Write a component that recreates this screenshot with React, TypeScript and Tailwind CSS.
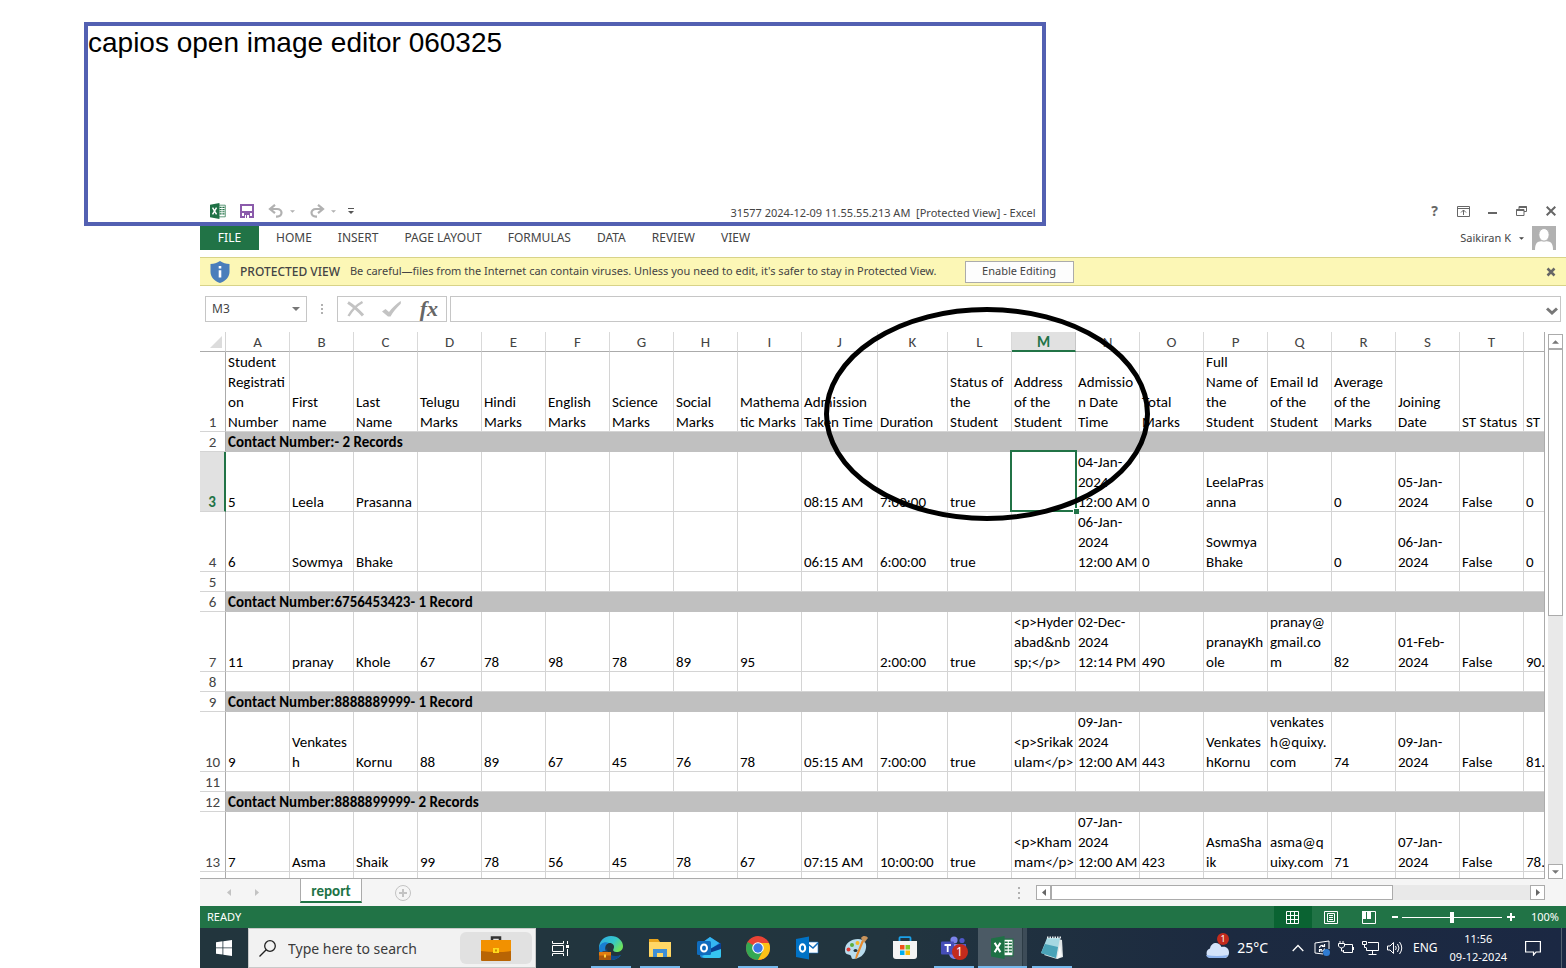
import React from "react";

type Row = {
  n: number;
  height: string;
  group?: string;
  cells?: string[];
};

const columns = "ABCDEFGHIJKLMNOPQRSTU".split("");

const rows: Row[] = [
  {
    n: 1,
    height: "h-20",
    cells: [
      "Student\nRegistrati\non\nNumber", "First\nname", "Last\nName", "Telugu\nMarks", "Hindi\nMarks",
      "English\nMarks", "Science\nMarks", "Social\nMarks", "Mathema\ntic Marks", "Admission\nTaken Time",
      "Duration", "Status of\nthe\nStudent", "Address\nof the\nStudent", "Admissio\nn Date\nTime",
      "Total\nMarks", "Full\nName of\nthe\nStudent", "Email Id\nof the\nStudent", "Average\nof the\nMarks",
      "Joining\nDate", "ST Status", "ST",
    ],
  },
  { n: 2, height: "h-5", group: "Contact Number:- 2 Records" },
  {
    n: 3,
    height: "h-15",
    cells: [
      "5", "Leela", "Prasanna", "", "", "", "", "", "", "08:15 AM", "7:00:00", "true", "",
      "04-Jan-\n2024\n12:00 AM", "0", "LeelaPras\nanna", "", "0", "05-Jan-\n2024", "False", "0",
    ],
  },
  {
    n: 4,
    height: "h-15",
    cells: [
      "6", "Sowmya", "Bhake", "", "", "", "", "", "", "06:15 AM", "6:00:00", "true", "",
      "06-Jan-\n2024\n12:00 AM", "0", "Sowmya\nBhake", "", "0", "06-Jan-\n2024", "False", "0",
    ],
  },
  { n: 5, height: "h-5", cells: [] },
  { n: 6, height: "h-5", group: "Contact Number:6756453423- 1 Record" },
  {
    n: 7,
    height: "h-15",
    cells: [
      "11", "pranay", "Khole", "67", "78", "98", "78", "89", "95", "", "2:00:00", "true",
      "<p>Hyder\nabad&nb\nsp;</p>", "02-Dec-\n2024\n12:14 PM", "490", "pranayKh\nole",
      "pranay@\ngmail.co\nm", "82", "01-Feb-\n2024", "False", "90.",
    ],
  },
  { n: 8, height: "h-5", cells: [] },
  { n: 9, height: "h-5", group: "Contact Number:8888889999- 1 Record" },
  {
    n: 10,
    height: "h-15",
    cells: [
      "9", "Venkates\nh", "Kornu", "88", "89", "67", "45", "76", "78", "05:15 AM", "7:00:00", "true",
      "<p>Srikak\nulam</p>", "09-Jan-\n2024\n12:00 AM", "443", "Venkates\nhKornu",
      "venkates\nh@quixy.\ncom", "74", "09-Jan-\n2024", "False", "81.",
    ],
  },
  { n: 11, height: "h-5", cells: [] },
  { n: 12, height: "h-5", group: "Contact Number:8888899999- 2 Records" },
  {
    n: 13,
    height: "h-15",
    cells: [
      "7", "Asma", "Shaik", "99", "78", "56", "45", "78", "67", "07:15 AM", "10:00:00", "true",
      "<p>Kham\nmam</p>", "07-Jan-\n2024\n12:00 AM", "423", "AsmaSha\nik", "asma@q\nuixy.com", "71",
      "07-Jan-\n2024", "False", "78.",
    ],
  },
];

function ExcelIcon({ className }: { className: string }) {
  return (
    <svg viewBox="0 0 22 22" className={className} aria-hidden="true">
      <path d="M11 3h10v16H11z" fill="#fff" stroke="#217346" strokeWidth="1" />
      <path d="M13 6h3M13 9h3M13 12h3M13 15h3M17 6h3M17 9h3M17 12h3M17 15h3" stroke="#217346" strokeWidth="1.6" />
      <path d="M0 2.5 13 0v22L0 19.5z" fill="#1e7145" />
      <path d="m3.5 6.5 5.5 9M9 6.5l-5.5 9" stroke="#fff" strokeWidth="2" />
    </svg>
  );
}

function Caret({ className }: { className: string }) {
  return (
    <svg viewBox="0 0 8 4" className={className} aria-hidden="true">
      <path d="M0 0h8L4 4z" fill="currentColor" />
    </svg>
  );
}

function TitleBar() {
  const control = "flex h-7 w-[29px] items-center justify-center text-[#666]";
  return (
    <header className="grid h-[30px] grid-cols-[1fr_auto_1fr] items-center">
      <div className="flex items-center pl-2.5 text-[#b1b1b1]">
        <ExcelIcon className="size-4" />
        <button aria-label="Save" className="ml-3.5">
          <svg viewBox="0 0 14 14" className="size-3.5">
            <path d="M1 1h12v12H1z" fill="#fff" stroke="#8b5bab" strokeWidth="2" />
            <path d="M1 8h12" stroke="#8b5bab" strokeWidth="2" />
            <path d="M4 9h6v5H4z" fill="#8b5bab" />
            <path d="M5 11h1v3H5zM7 11h2v3H7z" fill="#fff" />
          </svg>
        </button>
        <button aria-label="Undo" className="ml-3.5 flex items-center gap-1.5">
          <svg viewBox="0 0 16 14" className="h-3.5 w-4" fill="none" stroke="currentColor" strokeWidth="2.2">
            <path d="M7 0.8 2 5l5 4.2M2 5h7c6 0 6 7.6 0 7.6H8" />
          </svg>
          <Caret className="h-[3px] w-[5px]" />
        </button>
        <button aria-label="Redo" className="ml-3.5 flex items-center gap-1.5">
          <svg viewBox="0 0 16 14" className="h-3.5 w-4" fill="none" stroke="currentColor" strokeWidth="2.2">
            <path d="M9 0.8 14 5 9 9.2M14 5H7C1 5 1 12.6 7 12.6h1" />
          </svg>
          <Caret className="h-[3px] w-[5px]" />
        </button>
        <button aria-label="Customize toolbar" className="ml-3 flex flex-col items-center gap-0.5 text-[#555]">
          <span className="h-px w-1.5 bg-[#555]" />
          <Caret className="h-[3px] w-1.5" />
        </button>
      </div>
      <h1 className="pt-1 text-[11px] whitespace-pre text-[#444]">
        {"31577 2024-12-09 11.55.55.213 AM  [Protected View] - Excel"}
      </h1>
      <div className="flex justify-end pr-px">
        <button aria-label="Help" className={control}>
          <span className="text-sm font-bold">?</span>
        </button>
        <button aria-label="Ribbon display" className={control}>
          <svg viewBox="0 0 13 11" className="h-[11px] w-[13px]" fill="none" stroke="currentColor">
            <path d="M.5.5h12v10H.5zM.5 2.5h12M6.5 4v5M4 6.5 6.5 4 9 6.5" />
          </svg>
        </button>
        <button aria-label="Minimize" className={control}>
          <span className="mt-1 h-0.5 w-[9px] bg-[#666]" />
        </button>
        <button aria-label="Restore" className={control}>
          <svg viewBox="0 0 11 10" className="h-2.5 w-[11px]" fill="none" stroke="currentColor">
            <path d="M3 3V.5h7.5v5H8M.5 3.5h7.5v6H.5z" />
            <path d="M3 1h7.5M.5 4h7.5" strokeWidth="2" />
          </svg>
        </button>
        <button aria-label="Close" className={control}>
          <svg viewBox="0 0 10 10" className="size-2.5" stroke="currentColor" strokeWidth="2">
            <path d="m.7.7 8.6 8.6M9.3.7.7 9.3" />
          </svg>
        </button>
      </div>
    </header>
  );
}

function Ribbon() {
  return (
    <div className="flex h-6 items-center text-xs text-[#444]">
      <nav aria-label="Ribbon" className="flex items-center gap-[26px]">
        <button className="-mr-[9px] h-6 w-[59px] bg-[#217346] text-white">FILE</button>
        {["HOME", "INSERT", "PAGE LAYOUT", "FORMULAS", "DATA", "REVIEW", "VIEW"].map((t) => (
          <button key={t}>{t}</button>
        ))}
      </nav>
      <button className="mr-2.5 ml-auto flex items-center gap-2 text-[11px]">
        Saikiran K
        <Caret className="h-[3px] w-[5px]" />
        <svg viewBox="0 0 24 24" className="size-6" aria-hidden="true">
          <path d="M0 0h24v24H0z" fill="#b1b1b1" />
          <path d="M3 24c0-7 2.500-8.500 6-8.700h6c3.500.2 6 1.700 6 8.700z" fill="#fff" />
          <ellipse cx="12" cy="8.800" rx="5.200" ry="6.300" fill="#fff" stroke="#b1b1b1" />
        </svg>
      </button>
    </div>
  );
}

function ProtectedBanner() {
  return (
    <div className="mt-[7px] flex h-[29px] items-center border-y border-[#d8d388] bg-[#fcf7b6] text-[11px] whitespace-nowrap text-[#444]">
      <svg viewBox="0 0 20 22" className="mr-2.5 ml-2.5 h-[22px] w-5" aria-hidden="true">
        <path d="M10 0c3 2 6 2.800 9.500 3v8c0 5-4 9-9.500 11C4.500 20 .5 16 .5 11V3C4 2.800 7 2 10 0z" fill="#4a7ebb" />
        <path d="M10 5v2.500M10 9.200v7.300" stroke="#fff" strokeWidth="2.600" />
      </svg>
      <strong className="mr-2.5 text-xs font-medium">PROTECTED VIEW</strong>
      <p>
        Be careful—files from the Internet can contain viruses. Unless you need to edit, it&apos;s safer to stay in
        Protected View.
      </p>
      <button className="ml-7 h-[22px] w-[109px] border border-[#ababab] bg-[#fdfdfd]">Enable Editing</button>
      <button aria-label="Dismiss" className="mr-2.5 ml-auto text-[#666]">
        <svg viewBox="0 0 10 10" className="size-2.5" stroke="currentColor" strokeWidth="2.500">
          <path d="m1.500 1.500 7 7M8.500 1.500l-7 7" />
        </svg>
      </button>
    </div>
  );
}

function FormulaBar() {
  return (
    <div className="mt-2.5 mb-2.5 flex h-[26px] pr-[5px] pl-[5px]">
      <div className="flex w-[102px] items-center border border-[#c6c6c6] pr-1.5 pl-1.5 text-[#444]">
        <input aria-label="Name box" defaultValue="M3" className="w-0 flex-1 text-xs outline-none" />
        <Caret className="h-1 w-2 text-[#777]" />
      </div>
      <div className="flex w-[30px] flex-col items-center justify-center gap-0.5">
        <span className="size-0.5 bg-[#b1b1b1]" />
        <span className="size-0.5 bg-[#b1b1b1]" />
        <span className="size-0.5 bg-[#b1b1b1]" />
      </div>
      <div className="flex w-[110px] items-center justify-between border border-[#c6c6c6] pr-2 pl-[9px]">
        <button aria-label="Cancel">
          <svg viewBox="0 0 17 16" className="h-4 w-[17px]" fill="none" stroke="#c3c3c3">
            <path d="M1 1.500C5 4 11 9 16 14.500" strokeWidth="3" />
            <path d="M15.500 1C10 4 5 9 1.500 15" strokeWidth="2.400" />
          </svg>
        </button>
        <button aria-label="Enter">
          <svg viewBox="0 0 19 16" className="h-4 w-[19px]" fill="#c3c3c3">
            <path d="M0 10.500 3.500 8 7 11C10 7 14 3 18.500 0c.5.500.5 2.500 0 3C14 7.500 11 11 8.500 15.500H6z" />
          </svg>
        </button>
        <button aria-label="Insert function" className="font-['Liberation_Serif',serif] text-[22px] leading-6 font-bold text-[#666] italic">
          fx
        </button>
      </div>
      <div className="ml-[3px] flex flex-1 items-center border border-[#c6c6c6] pr-0.5">
        <input aria-label="Formula" className="w-0 flex-1 px-2 text-xs outline-none" />
        <button aria-label="Expand formula bar" className="pt-1">
          <svg viewBox="0 0 12 8" className="h-2 w-3" fill="none" stroke="#777" strokeWidth="3">
            <path d="m1 1.500 5 4.500 5-4.500" />
          </svg>
        </button>
      </div>
    </div>
  );
}

function Sheet() {
  return (
    <div className="min-w-0 flex-1 overflow-hidden border-r border-b border-[#ababab] font-['Carlito','Lato',sans-serif]">
      <table className="w-[1388px] table-fixed border-separate border-spacing-0 text-left text-[15px] leading-5 text-black">
        <colgroup>
          <col className="w-[26px]" />
          {columns.map((c) => (
            <col key={c} className={c === "J" ? "w-[76px]" : c === "K" ? "w-[70px]" : "w-16"} />
          ))}
        </colgroup>
        <thead>
          <tr className="h-5 text-center text-[#444]">
            <th aria-label="Select all" className="border-r border-b border-r-[#d4d4d4] border-b-[#ababab] p-0">
              <svg viewBox="0 0 12 12" className="ml-2.5 size-3" aria-hidden="true">
                <path d="M12 0v12H0z" fill="#dcdcdc" />
              </svg>
            </th>
            {columns.map((c) => (
              <th
                key={c}
                scope="col"
                className={
                  c === "M"
                    ? "border-r border-b-2 border-r-[#c6c6c6] border-b-[#217346] bg-[#e1e1e1] p-0 text-center align-top font-bold text-[#217346]"
                    : "border-r border-b border-r-[#d9d9d9] border-b-[#ababab] p-0 text-center align-top font-normal"
                }
              >
                <div className="h-[18px]">{c === "U" ? "" : c}</div>
              </th>
            ))}
          </tr>
        </thead>
        <tbody>
          {rows.map((r) => (
            <tr key={r.n} className={r.height}>
              <th
                scope="row"
                className={
                  r.n === 3
                    ? "border-r-2 border-b border-r-[#217346] border-b-[#d4d4d4] bg-[#e1e1e1] p-0 text-center align-bottom font-bold text-[#217346]"
                    : "border-r border-b border-r-[#ababab] border-b-[#d4d4d4] p-0 text-center align-bottom font-normal text-[#444]"
                }
              >
                <div className="h-[19px]">{r.n}</div>
              </th>
              {r.group ? (
                <td colSpan={21} className="bg-[#c0c0c0] p-0 pl-0.5 align-bottom font-bold">
                  {r.group}
                </td>
              ) : (
                columns.map((c, i) => (
                  <td
                    key={c}
                    className="relative border-r border-b border-[#d4d4d4] p-0 align-bottom"
                  >
                    {r.cells?.[i] ? (
                      <div className="-mb-px pl-0.5 whitespace-pre">{r.cells[i]}</div>
                    ) : null}
                    {r.n === 3 && c === "M" && (
                      <div className="absolute -inset-x-0.5 -top-0.5 -bottom-px z-10 border-2 border-[#217346]">
                        <span className="absolute -right-1 -bottom-1 size-[6px] border-t border-l border-white bg-[#217346]" />
                      </div>
                    )}
                  </td>
                ))
              )}
            </tr>
          ))}
          <tr className="h-1.5">
            <td className="border-r border-[#ababab] p-0" />
            {columns.map((c) => (
              <td key={c} className="border-r border-[#d4d4d4] p-0" />
            ))}
          </tr>
        </tbody>
      </table>
    </div>
  );
}

function VerticalScroll() {
  const arrow = "flex h-[15px] w-[15px] shrink-0 items-center justify-center border border-[#ababab] bg-white text-[#777]";
  return (
    <div className="mt-0.5 mr-[3px] ml-[3px] flex w-[15px] flex-col bg-[#f0f0f0]">
      <button aria-label="Scroll up" className={arrow}>
        <Caret className="h-1 w-[7px] rotate-180" />
      </button>
      <div className="flex flex-1 flex-col bg-[#e9e9e9]">
        <div className="h-[267px] border border-[#ababab] bg-white" />
      </div>
      <button aria-label="Scroll down" className={arrow}>
        <Caret className="h-1 w-[7px]" />
      </button>
    </div>
  );
}

function SheetTabs() {
  return (
    <div className="flex h-[27px] bg-[#f5f5f5] text-[#c3c3c3]">
      <div className="flex w-[100px] items-center gap-6 pl-[27px]">
        <button aria-label="Previous sheet">
          <svg viewBox="0 0 4 7" className="h-[7px] w-1" fill="currentColor"><path d="M4 0v7L0 3.500z" /></svg>
        </button>
        <button aria-label="Next sheet">
          <svg viewBox="0 0 4 7" className="h-[7px] w-1" fill="currentColor"><path d="M0 0v7l4-3.500z" /></svg>
        </button>
      </div>
      <button className="h-6 w-[62px] border-x border-b-2 border-x-[#ababab] border-b-[#217346] bg-white pt-0.5 font-['Carlito','Lato',sans-serif] text-[15px] leading-5 font-bold text-[#217346]">
        report
      </button>
      <button aria-label="New sheet" className="ml-[33px]">
        <svg viewBox="0 0 16 16" className="size-4" fill="none" stroke="currentColor">
          <circle cx="8" cy="8" r="7.500" />
          <path d="M8 4v8M4 8h8" strokeWidth="2" />
        </svg>
      </button>
      <div className="ml-auto flex w-[548px] items-center pr-[21px]">
        <div className="mr-4 flex flex-col gap-[3px]">
          <span className="size-0.5 bg-[#b1b1b1]" />
          <span className="size-0.5 bg-[#b1b1b1]" />
          <span className="size-0.5 bg-[#b1b1b1]" />
        </div>
        <button aria-label="Scroll left" className="flex h-[15px] w-[15px] items-center justify-center border border-[#ababab] bg-white text-[#666]">
          <svg viewBox="0 0 4 7" className="h-[7px] w-1" fill="currentColor"><path d="M4 0v7L0 3.500z" /></svg>
        </button>
        <div className="flex h-[15px] flex-1 bg-[#e9e9e9]">
          <div className="w-[342px] border border-[#ababab] bg-white" />
        </div>
        <button aria-label="Scroll right" className="flex h-[15px] w-[15px] items-center justify-center border border-[#ababab] bg-white text-[#666]">
          <svg viewBox="0 0 4 7" className="h-[7px] w-1" fill="currentColor"><path d="M0 0v7l4-3.500z" /></svg>
        </button>
      </div>
    </div>
  );
}

function StatusBar() {
  return (
    <footer className="flex h-[22px] items-center bg-[#217346] pr-[7px] pl-[7px] text-[11px] text-white">
      <span>READY</span>
      <button aria-label="Normal view" className="ml-auto flex h-[22px] w-[38px] items-center justify-center bg-[#0a6332]">
        <svg viewBox="0 0 13 13" className="size-[13px]" fill="none" stroke="#fff">
          <path d="M.5.500h12v12H.5zM4.500.500v12M8.500.500v12M.5 4.500h12M.5 8.500h12" />
        </svg>
      </button>
      <button aria-label="Page layout view" className="flex w-[38px] justify-center">
        <svg viewBox="0 0 14 13" className="h-[13px] w-3.5" fill="none" stroke="#fff">
          <path d="M.5.500h13v12H.5zM3.500 2.500h7v8h-7zM5 4.500h4M5 6.500h4M5 8.500h4" />
        </svg>
      </button>
      <button aria-label="Page break view" className="flex w-[38px] justify-center">
        <svg viewBox="0 0 14 13" className="h-[13px] w-3.5" fill="none" stroke="#fff">
          <path d="M.5.500h13v12H.5z" />
          <path d="M0 0h4v8H0zM5 0h4v8H5z" fill="#fff" stroke="none" />
        </svg>
      </button>
      <button aria-label="Zoom out" className="ml-px flex h-3 w-3 items-center justify-center">
        <span className="h-0.5 w-1.5 bg-white" />
      </button>
      <input
        type="range"
        aria-label="Zoom"
        defaultValue={50}
        className="mx-px h-3 w-[100px] appearance-none bg-transparent bg-[linear-gradient(#fff,#fff)] bg-[length:100%_1px] bg-center bg-no-repeat [&::-webkit-slider-thumb]:h-[11px] [&::-webkit-slider-thumb]:w-1 [&::-webkit-slider-thumb]:appearance-none [&::-webkit-slider-thumb]:bg-white"
      />
      <button aria-label="Zoom in" className="ml-0.5 flex h-3 w-3 items-center justify-center">
        <svg viewBox="0 0 8 8" className="size-2" stroke="#fff" strokeWidth="2"><path d="M4 0v8M0 4h8" /></svg>
      </button>
      <span className="ml-3.5">100%</span>
    </footer>
  );
}

const taskIcons: { name: string; state: string; icon: React.ReactNode }[] = [
  {
    name: "Edge",
    state: "open",
    icon: (
      <>
        <defs>
          <linearGradient id="edgeTop" x1="0" y1="0" x2="1" y2="0.600">
            <stop offset="0" stopColor="#2fa8e8" />
            <stop offset="0.600" stopColor="#35c8c9" />
            <stop offset="1" stopColor="#6ee35b" />
          </linearGradient>
        </defs>
        <path d="M0 12C0 5 5 0 12 0s12 5 12 10c0 4-3 6-6.500 6-3 0-4-1.500-3-3 2-4-2-7-6-5.500C4 8 1 11 0 14z" fill="url(#edgeTop)" />
        <path d="M0 12c1-5 6-7 10-5-4 1-5 6-2 10s9 5 14 2c-3 4-7 5-10 5C5 24 0 19 0 12z" fill="#1a7fd0" />
        <path d="M8.500 11c-2 6 4 11 13.500 8-3 4-7 5-10 5-5-3-6-9-3.500-13z" fill="#114a8b" />
        <path d="M0 16h12v8H0z" fill="#e07b10" />
        <path d="M0 19.500h12V24H0z" fill="#a9560c" />
        <path d="M3.500 15.500h5" stroke="#444" />
        <path d="M5 18.500h2v3H5z" fill="#ffd23c" />
      </>
    ),
  },
  {
    name: "File Explorer",
    state: "open",
    icon: (
      <>
        <path d="M1 3h9l2 3h11v4H1z" fill="#e8a41c" />
        <path d="M1 6h22v15H1z" fill="#ffd766" />
        <path d="M5 21v-8h14v8h-4v-4H9v4z" fill="#3f8fd6" />
        <path d="M1 20h4v1H1zM19 20h4v1h-4z" fill="#f5c343" />
      </>
    ),
  },
  {
    name: "Outlook",
    state: "",
    icon: (
      <>
        <path d="M3 8 13 1l11 7v12q0 2-2 2H6q-3 0-3-3z" fill="#1a86d9" />
        <path d="m5 7 8-6 9 6-8 6z" fill="#35b6f2" />
        <path d="M24 7v7l-9 5-2-6z" fill="#0a3f91" />
        <path d="M24 13v7q0 2-2 2H8q-2 0-3-2l10-4z" fill="#36c5f0" />
        <rect x="0" y="5" width="14" height="14" rx="1.500" fill="#0f6cbd" />
        <ellipse cx="7" cy="12" rx="3" ry="3.500" fill="none" stroke="#fff" strokeWidth="2" />
      </>
    ),
  },
  {
    name: "Chrome",
    state: "open",
    icon: (
      <>
        <circle cx="12" cy="12" r="12" fill="#ea4335" />
        <path d="m12 12 5 3-5 9C5 24 0 19 0 12c0-2 .6-4.500 1.700-6z" fill="#34a853" />
        <path d="M17 15 12 24c7 0 12-5 12-12 0-2-.5-3.500-1-5H12z" fill="#fbc116" />
        <circle cx="12" cy="12" r="5.800" fill="#fff" />
        <circle cx="12" cy="12" r="4.700" fill="#3b78e7" />
      </>
    ),
  },
  {
    name: "Outlook 2013",
    state: "",
    icon: (
      <>
        <path d="M12 6h11v11H12z" fill="#fff" stroke="#1b75c9" strokeWidth="0.600" />
        <path d="m13 8 5 4 5-5" fill="none" stroke="#0f6cbd" strokeWidth="1.500" />
        <path d="M1 3 14 .500v23L1 21z" fill="#0072c6" />
        <ellipse cx="7.500" cy="12" rx="2.700" ry="3.700" fill="none" stroke="#fff" strokeWidth="2" />
      </>
    ),
  },
  {
    name: "Paint",
    state: "",
    icon: (
      <>
        <path d="M1 14C1 7 7 3 14 3c6 0 9 4 8 9-1 7-7 11-13 11-2 0-1-3-3-4s-5 0-5-5z" fill="#b9dcee" />
        <ellipse cx="11.500" cy="14.500" rx="2" ry="1.600" fill="#22343c" />
        <circle cx="4.500" cy="13.500" r="2" fill="#e23b34" />
        <circle cx="8" cy="9" r="2" fill="#5dae3b" />
        <circle cx="13.500" cy="7" r="2" fill="#f4b92a" />
        <path d="M20 5 13 22l-2 1 1-4 6-15z" fill="#e88a2d" />
        <path d="M17 2c2-3 6-2 7 0l-4 5z" fill="#c9945c" />
      </>
    ),
  },
  {
    name: "Store",
    state: "",
    icon: (
      <>
        <path d="M6.500 6V2q0-.8.8-.8h9.400q.8 0 .8.800v4" fill="none" stroke="#1ba1e9" strokeWidth="1.800" />
        <path d="M0 5h24v15q0 3-3 3H3q-3 0-3-3z" fill="#f4f4f4" />
        <path d="M7 9h4.500v4.500H7z" fill="#f1511b" />
        <path d="M12.500 9H17v4.500h-4.500z" fill="#80cc28" />
        <path d="M7 14.500h4.500V19H7z" fill="#00adef" />
        <path d="M12.500 14.500H17V19h-4.500z" fill="#fbbc09" />
      </>
    ),
  },
  {
    name: "Teams",
    state: "open",
    icon: (
      <>
        <circle cx="12" cy="4" r="3.600" fill="#7b83eb" />
        <circle cx="20" cy="4.500" r="2.600" fill="#5059c9" />
        <path d="M15 8h9v6q0 4-4 4h-5z" fill="#5059c9" />
        <path d="M7 8h11v9q-1 6-6 6-5-1-5-6z" fill="#7b83eb" />
        <rect x="-1" y="5.500" width="13" height="13" rx="1" fill="#464eb8" />
        <path d="M2.500 9h6.500M5.700 9v7" stroke="#fff" strokeWidth="1.800" />
      </>
    ),
  },
  { name: "Excel", state: "active", icon: null },
  {
    name: "Notepad",
    state: "open",
    icon: (
      <>
        <path d="m19 3 3 1 1 17-6 2-13-4z" fill="#dfe5e6" />
        <path d="M7 2h13l-4 20L1 17z" fill="#a6d8e2" />
        <path d="m5 8 13 3-2 11L1 17z" fill="#4aa3b8" />
        <path d="M7 1.500h14" stroke="#e8eef0" strokeWidth="2" strokeDasharray="1.500 1" />
        <path d="m20 9 2 11-5 3z" fill="#f8fafa" />
      </>
    ),
  },
];

function Taskbar() {
  return (
    <div className="flex h-10 items-center bg-[linear-gradient(90deg,#22353d_0%,#22353f_50%,#1c2a40_75%,#1b2843_100%)] text-white">
      <button aria-label="Start" className="flex h-10 w-12 items-center justify-center">
        <svg viewBox="0 0 16 16" className="size-4" fill="#fff">
          <path d="M0 2.200 6.500 1.300v6.200H0zM7.300 1.200 16 0v7.500H7.300zM0 8.300h6.500v6.300L0 13.700zM7.300 8.300H16V16l-8.700-1.200z" />
        </svg>
      </button>
      <div className="flex h-10 w-72 items-center border border-[#c9c9c9] bg-[#f2f2f2] pr-[3px] pl-2.5">
        <svg viewBox="0 0 17 17" className="size-[17px]" fill="none" stroke="#222" strokeWidth="1.300">
          <circle cx="11" cy="6" r="5.300" />
          <path d="M7.200 9.800.500 16.500" />
        </svg>
        <input
          aria-label="Search"
          placeholder="Type here to search"
          className="ml-3 w-0 flex-1 text-[14px] outline-none placeholder:text-[#3b3b3b]"
        />
        <div className="flex h-8 w-[72px] items-center justify-center rounded-md bg-[#e1e1e1]">
          <svg viewBox="0 0 30 25" className="h-[25px] w-[30px]" aria-hidden="true">
            <path d="M11 4V1.500h8V4" fill="none" stroke="#333" strokeWidth="2.500" />
            <rect y="4" width="30" height="21" rx="1" fill="#b86404" />
            <path d="M0 5q0-1 1-1h28q1 0 1 1v10q-15 2-30 0z" fill="#f29100" />
            <path d="M12 12h6v5h-6z" fill="#ffd91c" />
            <path d="M14 13.500h2v2h-2z" fill="#c98a00" />
          </svg>
        </div>
      </div>
      <button aria-label="Task view" className="flex h-10 w-12 items-center justify-center">
        <svg viewBox="0 0 17 15" className="h-[15px] w-[17px]" fill="none" stroke="#fff">
          <path d="M.5 0v2.500h11V0M.5 15v-2.500h11V15M.5 4.500h11v6H.500zM15.500 0v3M15.500 8v7" />
          <path d="M14 4h3v3h-3z" fill="#fff" stroke="none" />
        </svg>
      </button>
      <div className="flex pl-0.5">
        {taskIcons.map((t) => (
          <button
            key={t.name}
            aria-label={t.name}
            className={
              t.state === "active"
                ? "flex h-10 w-[49px] flex-col items-center justify-between border-b-2 border-[#76b9ed] bg-[linear-gradient(90deg,#4b5a65_90%,#2c3b45_90%,#2c3b45_92%,#3d4c58_92%)]"
                : "flex h-10 w-[49px] flex-col items-center justify-between"
            }
          >
            <span className="relative mt-2 block size-6">
              {t.state === "active" ? (
                <ExcelIcon className="size-[23px]" />
              ) : (
                <svg viewBox="0 0 24 24" className="size-6 overflow-visible" aria-hidden="true">{t.icon}</svg>
              )}
              {t.name === "Teams" && (
                <span className="absolute top-2 left-2.5 flex size-4 items-center justify-center rounded-full bg-[#c42b1c] text-xs">
                  1
                </span>
              )}
            </span>
            {t.state === "open" && <span className="h-0.5 w-10 bg-[#76b9ed]" />}
          </button>
        ))}
      </div>
      <div className="ml-auto flex h-10 items-center">
        <button className="flex items-center gap-2 text-sm">
          <span className="relative block">
            <svg viewBox="0 0 24 22" className="h-[22px] w-6" aria-hidden="true">
              <path d="M5 21a5 5 0 0 1 0-9.500C6 5 14 4 16.500 10c5-1 7.500 2 7.500 5.500S22 21 19 21z" fill="#d4e3fa" />
              <path d="M1 18q11 2 22 0-1 3-4 3H5q-3 0-4-3z" fill="#8fb4ee" />
            </svg>
            <span className="absolute -top-1 left-3 flex size-3 items-center justify-center rounded-full bg-[#c42b1c] text-[9px]">
              1
            </span>
          </span>
          25°C
        </button>
        <button aria-label="Show hidden icons" className="ml-6">
          <svg viewBox="0 0 12 8" className="h-2 w-3" fill="none" stroke="#fff" strokeWidth="1.300"><path d="m.7 7 5.300-5.500L11.300 7" /></svg>
        </button>
        <div className="ml-2.5 flex items-center gap-2">
          <svg viewBox="0 0 16 16" className="size-4" fill="none" stroke="#fff">
            <path d="M15 9V1L1 3v10l8 1" />
            <path d="M5.500 8a2.500 2.500 0 0 1 4-2M10.500 4v2.500H8M10.500 8.500a2.500 2.500 0 0 1-4 2M5.500 12V9.500H8" strokeWidth="1.200" />
            <circle cx="12.500" cy="12.500" r="3.500" fill="#2f7cd3" stroke="none" />
          </svg>
          <svg viewBox="0 0 16 16" className="size-4" fill="none" stroke="#fff">
            <path d="M7 4.500h7.500v8h-9V10M15.500 7v3M2 1v2.500M5 1v2.500M.5 3.500h6V6q-1 2-3 2t-3-2zM3.500 8v3h2" />
          </svg>
          <svg viewBox="0 0 17 16" className="h-4 w-[17px]" fill="none" stroke="#fff">
            <path d="M6 2.500h10.500v8h-12V8M10.500 10.500v4M6.500 14.500h8M.5 1.500h4v3h-4zM2.500 4.500v3h2" />
          </svg>
          <svg viewBox="0 0 16 14" className="h-3.5 w-4" fill="none" stroke="#fff">
            <path d="M.5 5v4H3l3.500 3.500v-11L3 5zM8.500 5q1.500 2 0 4M10.500 3q3 4 0 8M12.500 1q4.500 6 0 12" />
          </svg>
        </div>
        <span className="ml-2.5 text-xs">ENG</span>
        <div className="ml-3 text-center text-[11px] leading-[18px]">
          <div>11:56</div>
          <div>09-12-2024</div>
        </div>
        <button aria-label="Notifications" className="ml-[18px]">
          <svg viewBox="0 0 16 16" className="size-4" fill="none" stroke="#fff" strokeWidth="1.200">
            <path d="M.6 1.500h14.800v10.500H11L8.500 15v-3H.600z" />
          </svg>
        </button>
        <span className="mr-1 ml-5 h-10 w-px bg-[#54606f]" />
      </div>
    </div>
  );
}

export default function App() {
  return (
    <main className="relative min-h-screen overflow-hidden bg-white pt-49 pl-50 font-['Noto_Sans','Open_Sans',sans-serif]">
      <TitleBar />
      <Ribbon />
      <ProtectedBanner />
      <FormulaBar />
      <div className="flex">
        <Sheet />
        <VerticalScroll />
      </div>
      <SheetTabs />
      <StatusBar />
      <Taskbar />
      <div className="pointer-events-none absolute top-[22px] left-[84px] z-20 h-51 w-[962px] border-4 border-[#5360b2]">
        <p className="font-['Liberation_Sans',sans-serif] text-[28px] leading-[34px] text-black">
          capios open image editor 060325
        </p>
      </div>
      <svg viewBox="0 0 326 214" className="pointer-events-none absolute top-[307px] left-[824px] z-20 h-[214px] w-[326px]" aria-hidden="true">
        <ellipse cx="163" cy="107" rx="160.500" ry="104.500" fill="none" stroke="#000" strokeWidth="5" />
      </svg>
    </main>
  );
}
